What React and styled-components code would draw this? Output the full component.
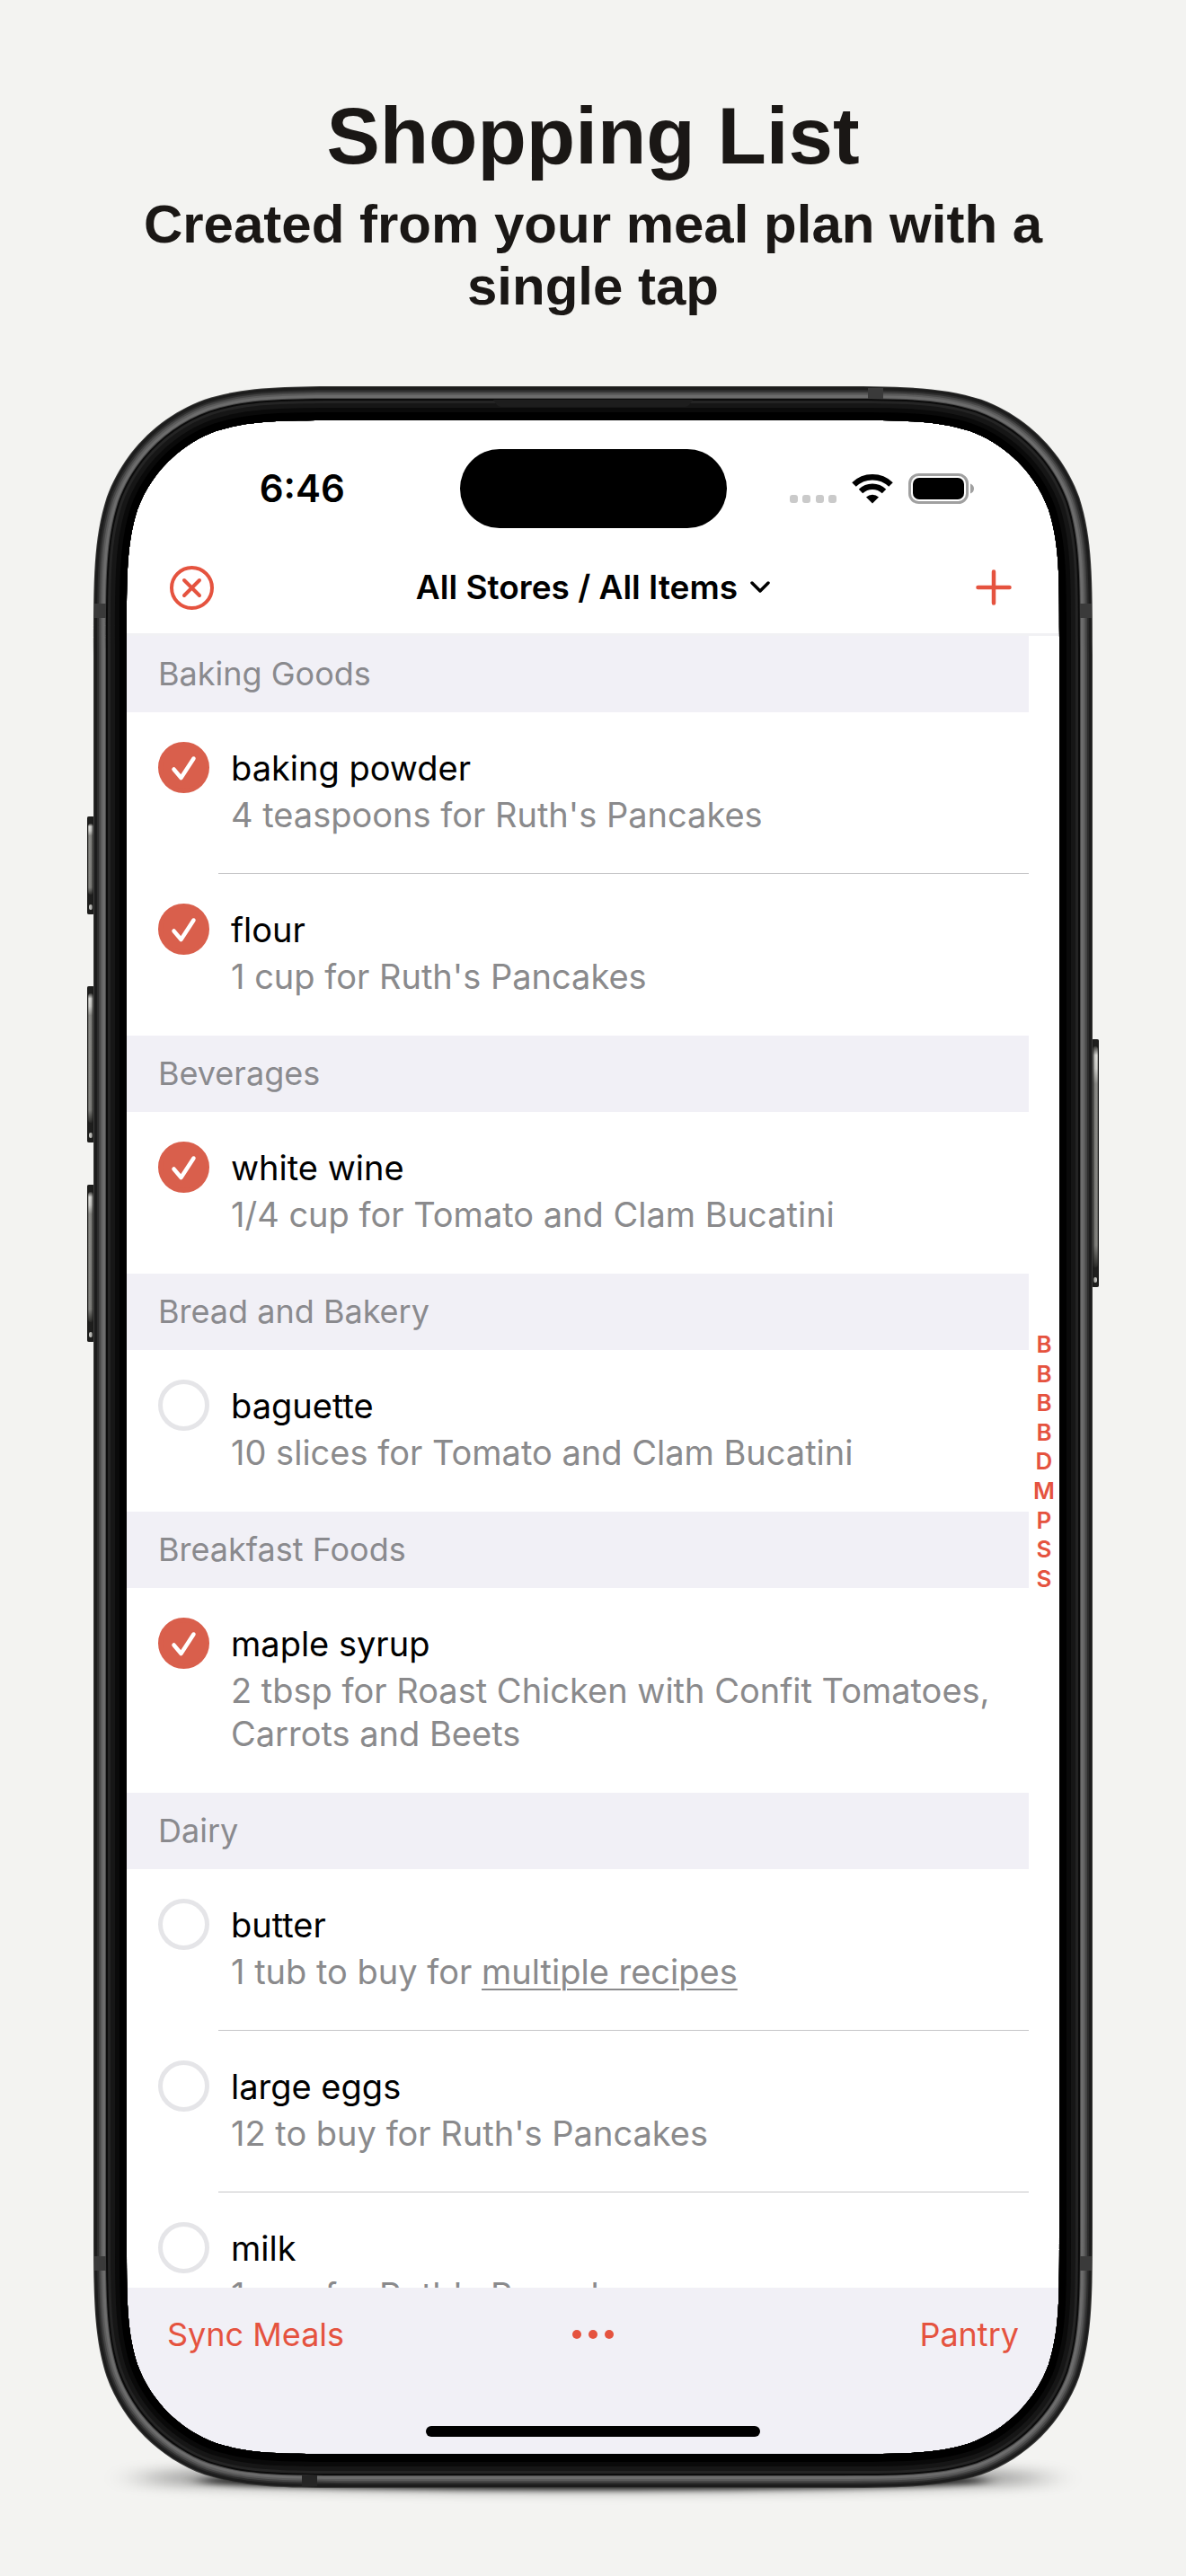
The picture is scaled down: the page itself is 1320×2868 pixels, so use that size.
import React, { useState } from "react";
import styled, { createGlobalStyle } from "styled-components";

const ink = "#1a1715";
const accent = "#e5533f";
const sans = `Inter, "Noto Sans", sans-serif`;

const GlobalStyle = createGlobalStyle`
  *, *::before, *::after { box-sizing: border-box; }
  body { margin: 0; background: #f3f3f1; font-family: ${sans}; }
  button { border: 0; padding: 0; background: none; font: inherit; color: inherit; cursor: pointer; }
  h1, h2, h3, p, ul { margin: 0; padding: 0; font-weight: inherit; }
  svg { display: block; }
`;

const Page = styled.main`
  display: flex;
  flex-direction: column;
  align-items: center;
  min-height: 100vh;
  padding: 101px 98px 98px;
`;

const Intro = styled.header`
  display: flex;
  flex-direction: column;
  gap: 13px;
  max-width: 1060px;
  margin-bottom: 77px;
  color: ${ink};
  font-family: "Liberation Sans", Arial, sans-serif;
  font-weight: 700;
  text-align: center;
`;

const Headline = styled.h1`
  font-size: 89px;
  line-height: 101px;
  font-weight: 700;
`;

const Tagline = styled.p`
  font-size: 60px;
  line-height: 69px;
`;

const Phone = styled.div`
  position: relative;
  width: 100%;
  max-width: 1112px;
  padding: 38px 37px;
`;

const FrameArt = styled.svg`
  position: absolute;
  inset: 0;
  z-index: 2;
  width: 100%;
  height: 100%;
  overflow: visible;
  pointer-events: none;
`;

const Screen = styled.div`
  position: relative;
  display: flex;
  flex-direction: column;
  overflow: hidden;
  border-radius: 140px;
  background: #fff;
`;

const StatusBar = styled.div`
  display: grid;
  grid-template-columns: 1fr 297px 1fr;
  align-items: center;
  height: 152px;
`;

const Clock = styled.time`
  justify-self: center;
  padding-left: 20px;
  font-size: 42px;
  line-height: 48px;
  font-weight: 600;
`;

const Island = styled.div`
  height: 88px;
  border-radius: 44px;
  background: #000;
`;

const StatusIcons = styled.div`
  display: flex;
  align-items: center;
  gap: 17px;
  padding-left: 70px;
`;

const NavBar = styled.nav`
  display: flex;
  align-items: center;
  justify-content: space-between;
  height: 85px;
  padding: 0 48px 17px;
`;

const IconButton = styled.button`
  display: flex;
  align-items: center;
  justify-content: center;
  width: 49px;
  height: 49px;
  color: ${accent};
`;

const StorePicker = styled.button`
  display: flex;
  align-items: center;
  gap: 14px;
  color: #000;
  font-size: 37px;
  line-height: 48px;
  font-weight: 600;
`;

const ListArea = styled.div`
  display: flex;
  height: 1842px;
  border-top: 3px solid #f1f1f4;
  overflow: hidden;
`;

const Sections = styled.div`
  flex: 1;
  min-width: 0;
`;

const SectionTitle = styled.h2`
  padding: 0 35px;
  background: #f1f0f6;
  color: #8a8a8e;
  font-size: 36px;
  line-height: 85px;
`;

const Item = styled.li`
  display: flex;
  gap: 10px;
  padding-left: 35px;
  list-style: none;
`;

const Tick = styled.label`
  flex: none;
  width: 57px;
  height: 57px;
  margin-top: 33px;
  border-radius: 50%;
  cursor: pointer;
`;

const TickInput = styled.input`
  appearance: none;
  display: block;
  width: 57px;
  height: 57px;
  margin: 0;
  border: 5px solid #e5e5e8;
  border-radius: 50%;
  cursor: inherit;
  &:checked {
    border-color: #d95f4c;
    background: #d95f4c;
  }
`;

const TickMark = styled.svg`
  width: 57px;
  height: 57px;
  margin-top: -57px;
  pointer-events: none;
`;

const ItemBody = styled.div`
  flex: 1;
  padding: 38px 14px 41px;
  border-bottom: 1px solid ${(p) => (p.$divided ? "#c6c6c8" : "transparent")};
  font-size: 38px;
  line-height: 48px;
`;

const ItemName = styled.h3`
  margin-bottom: 4px;
  color: #000;
  font-size: 38px;
`;

const ItemNote = styled.p`
  color: #8a8a8c;
`;

const RecipeLink = styled.a`
  color: inherit;
  text-decoration: underline;
  text-decoration-thickness: 2px;
  text-underline-offset: 5px;
`;

const IndexRail = styled.nav`
  display: grid;
  align-self: center;
  grid-auto-rows: 1fr;
  align-items: center;
  justify-items: center;
  width: 34px;
  height: 293px;
`;

const IndexLetter = styled.a`
  color: ${accent};
  font-size: 26px;
  line-height: 32px;
  font-weight: 600;
  text-decoration: none;
`;

const ToolBar = styled.footer`
  display: flex;
  flex-direction: column;
  justify-content: space-between;
  align-items: center;
  height: 185px;
  padding: 28px 45px 19px;
  background: #f1f0f6;
`;

const Actions = styled.div`
  display: grid;
  grid-template-columns: 1fr auto 1fr;
  align-items: center;
  width: 100%;
`;

const Action = styled.button`
  justify-self: ${(p) => p.$side};
  color: ${accent};
  font-size: 36px;
  line-height: 48px;
`;

const HomeBar = styled.div`
  width: 372px;
  height: 12px;
  border-radius: 6px;
  background: #000;
`;

const SECTIONS = [
  { title: "Baking Goods", items: [
    { name: "baking powder", note: "4 teaspoons for Ruth's Pancakes", done: true },
    { name: "flour", note: "1 cup for Ruth's Pancakes", done: true },
  ] },
  { title: "Beverages", items: [
    { name: "white wine", note: "1/4 cup for Tomato and Clam Bucatini", done: true },
  ] },
  { title: "Bread and Bakery", items: [
    { name: "baguette", note: "10 slices for Tomato and Clam Bucatini", done: false },
  ] },
  { title: "Breakfast Foods", items: [
    { name: "maple syrup", note: "2 tbsp for Roast Chicken with Confit Tomatoes, Carrots and Beets", done: true },
  ] },
  { title: "Dairy", items: [
    { name: "butter", note: "1 tub to buy for ", link: "multiple recipes", done: false },
    { name: "large eggs", note: "12 to buy for Ruth's Pancakes", done: false },
    { name: "milk", note: "1 cup for Ruth's Pancakes", done: false },
  ] },
];

const INDEX = ["B", "B", "B", "B", "D", "M", "P", "S", "S"];

/* Rounded rectangle with continuous-curvature corners. */
function squircle(x, y, w, h, r) {
  const a = 1.52866 * r, b = 1.08849 * r, c = 0.86841 * r, d = 0.63149 * r;
  const e = 0.07491 * r, f = 0.37282 * r, g = 0.16906 * r;
  const R = x + w, B = y + h;
  return [
    `M${x + a} ${y}H${R - a}`,
    `C${R - b} ${y} ${R - c} ${y} ${R - d} ${y + e}`,
    `C${R - f} ${y + g} ${R - g} ${y + f} ${R - e} ${y + d}`,
    `C${R} ${y + c} ${R} ${y + b} ${R} ${y + a}`,
    `V${B - a}`,
    `C${R} ${B - b} ${R} ${B - c} ${R - e} ${B - d}`,
    `C${R - g} ${B - f} ${R - f} ${B - g} ${R - d} ${B - e}`,
    `C${R - c} ${B} ${R - b} ${B} ${R - a} ${B}`,
    `H${x + a}`,
    `C${x + b} ${B} ${x + c} ${B} ${x + d} ${B - e}`,
    `C${x + f} ${B - g} ${x + g} ${B - f} ${x + e} ${B - d}`,
    `C${x} ${B - c} ${x} ${B - b} ${x} ${B - a}`,
    `V${y + a}`,
    `C${x} ${y + b} ${x} ${y + c} ${x + e} ${y + d}`,
    `C${x + g} ${y + f} ${x + f} ${y + g} ${x + d} ${y + e}`,
    `C${x + c} ${y} ${x + b} ${y} ${x + a} ${y}Z`,
  ].join("");
}

const W = 1112, H = 2340;
const hole = squircle(37, 38, 1038, 2264, 158);
const inset = (n) => squircle(n, n, W - 2 * n, H - 2 * n, 196 - n) + hole;
const METAL = [
  [0, "#3c3c3b"], [1, "#1c1c1c"], [4, "#2c2c2c"], [6, "#454545"], [8, "#5c5c5c"],
  [10, "#6c6c6c"], [13, "#4a4a4a"], [14, "#0b0b0b"], [16, "#242424"], [19, "#161616"], [24, "#0a0a0a"], [29, "#000"],
];

function SideButton({ x, y, h, side }) {
  return (
    <g>
      <rect x={x} y={y} width="8" height={h} rx="2" fill="#1f1f1e" />
      <rect x={x + 1} y={y + 8} width="6" height={h - 30} rx="3" fill="url(#buttonSheen)" />
      <rect x={x + 2} y={y + h - 11} width="4" height="6" rx="2" fill="#c4c4c0" />
      <rect x={x} y={y} width="8" height={h} rx="2" fill={`url(#shade-${side})`} />
    </g>
  );
}

function PhoneFrame() {
  return (
    <FrameArt viewBox={`0 0 ${W} ${H}`} preserveAspectRatio="none" aria-hidden="true">
      <defs>
        <filter id="soft" x="-20%" y="-300%" width="140%" height="700%">
          <feGaussianBlur stdDeviation="20 8" />
        </filter>
        <filter id="contact" x="-20%" y="-200%" width="140%" height="500%">
          <feGaussianBlur stdDeviation="10 3" />
        </filter>
        <linearGradient id="buttonSheen" x2="0" y2="1">
          <stop offset="0" stopColor="#3a3a38" />
          <stop offset="0.04" stopColor="#dededa" />
          <stop offset="0.1" stopColor="#d0d0cc" />
          <stop offset="0.17" stopColor="#8b8b87" />
          <stop offset="0.9" stopColor="#82827e" />
          <stop offset="1" stopColor="#2a2a28" />
        </linearGradient>
        <linearGradient id="shade-left">
          <stop offset="0" stopColor="#1a1a19" stopOpacity="0.7" />
          <stop offset="0.3" stopColor="#1a1a19" stopOpacity="0" />
          <stop offset="0.55" stopColor="#1a1a19" stopOpacity="0.1" />
          <stop offset="0.9" stopColor="#1a1a19" stopOpacity="0.9" />
        </linearGradient>
        <linearGradient id="shade-right" x1="1" x2="0">
          <stop offset="0" stopColor="#1a1a19" stopOpacity="0.7" />
          <stop offset="0.3" stopColor="#1a1a19" stopOpacity="0" />
          <stop offset="0.55" stopColor="#1a1a19" stopOpacity="0.1" />
          <stop offset="0.9" stopColor="#1a1a19" stopOpacity="0.9" />
        </linearGradient>
        <clipPath id="below">
          <path clipRule="evenodd" d={`M-100 2200H1212V2460H-100Z${hole}`} />
        </clipPath>
      </defs>
      <g clipPath="url(#below)">
        <ellipse cx="556" cy="2329" rx="510" ry="12" fill="#000" opacity="0.5" filter="url(#soft)" />
        <ellipse cx="556" cy="2332" rx="440" ry="10" fill="#000" opacity="0.8" filter="url(#contact)" />
      </g>
      <SideButton x={-7} y={479} h={109} side="left" />
      <SideButton x={-7} y={668} h={174} side="left" />
      <SideButton x={-7} y={889} h={175} side="left" />
      <SideButton x={1111} y={727} h={276} side="right" />
      {METAL.map(([n, color]) => (
        <path key={n} d={inset(n)} fill={color} fillRule="evenodd" />
      ))}
      <g fill="#3a3a3a">
        <rect x="862" y="2" width="17" height="12" />
        <rect x="1" y="242" width="13" height="16" />
        <rect x="1098" y="242" width="13" height="16" />
        <rect x="1" y="2082" width="13" height="16" />
        <rect x="1098" y="2082" width="13" height="16" />
      </g>
      <rect x="232" y="2326" width="17" height="12" fill="#252525" />
      <path d="M445 15h222l-4 6q-2 2-5 2H454q-3 0-5-2z" fill="#1d1d1d" />
    </FrameArt>
  );
}

function ListItem({ item, divided, id }) {
  const [done, setDone] = useState(item.done);
  return (
    <Item>
      <Tick htmlFor={id}>
        <TickInput id={id} type="checkbox" aria-label={item.name} checked={done} onChange={() => setDone(!done)} />
        {done && (
          <TickMark viewBox="0 0 57 57" fill="none" stroke="#fff" strokeWidth="4.500" strokeLinecap="round" strokeLinejoin="round">
            <path d="M17.500 30.500l8 9.500L39.500 18.500" />
          </TickMark>
        )}
      </Tick>
      <ItemBody $divided={divided}>
        <ItemName>{item.name}</ItemName>
        <ItemNote>
          {item.note}
          {item.link && <RecipeLink href="#recipes">{item.link}</RecipeLink>}
        </ItemNote>
      </ItemBody>
    </Item>
  );
}

export default function App() {
  return (
    <>
      <GlobalStyle />
      <Page>
        <Intro>
          <Headline>Shopping List</Headline>
          <Tagline>Created from your meal plan with a single tap</Tagline>
        </Intro>
        <Phone>
          <PhoneFrame />
          <Screen>
            <StatusBar>
              <Clock>6:46</Clock>
              <Island />
              <StatusIcons>
                <svg width="52" height="34" viewBox="0 0 52 34" fill="#cacaca" aria-hidden="true">
                  <rect x="0" y="24" width="9" height="9" rx="3" />
                  <rect x="14" y="24" width="9" height="9" rx="3" />
                  <rect x="29" y="24" width="9" height="9" rx="3" />
                  <rect x="43" y="24" width="9" height="9" rx="3" />
                </svg>
                <svg width="46" height="34" viewBox="0 0 46 34" fill="none" stroke="#000" aria-hidden="true">
                  <path d="M2.500 12.500a29.500 29.500 0 0 1 41 0" strokeWidth="6.500" />
                  <path d="M10 20a19 19 0 0 1 26 0" strokeWidth="6.500" />
                  <path d="M23 33.500l-7-7a10.500 10.500 0 0 1 14 0z" fill="#000" stroke="none" />
                </svg>
                <svg width="74" height="34" viewBox="0 0 74 34" aria-hidden="true">
                  <rect x="1.500" y="1.500" width="64" height="31" rx="10" fill="none" stroke="#a0a0a0" strokeWidth="3" />
                  <rect x="5" y="5" width="57" height="24" rx="7" fill="#000" />
                  <path d="M69 11.500q4 1.500 4 5.500t-4 5.500z" fill="#a0a0a0" />
                </svg>
              </StatusIcons>
            </StatusBar>
            <NavBar>
              <IconButton aria-label="Close">
                <svg width="49" height="49" viewBox="0 0 49 49" fill="none" stroke="currentColor" strokeWidth="4" strokeLinecap="round">
                  <circle cx="24.500" cy="24.500" r="22.500" />
                  <path d="M16 16l17 17M33 16l-17 17" />
                </svg>
              </IconButton>
              <StorePicker>
                All Stores / All Items
                <svg width="22" height="14" viewBox="0 0 22 14" fill="none" stroke="#000" strokeWidth="3.500" strokeLinecap="round" strokeLinejoin="round" aria-hidden="true">
                  <path d="M2 2l9 9 9-9" />
                </svg>
              </StorePicker>
              <IconButton aria-label="Add item">
                <svg width="40" height="40" viewBox="0 0 40 40" fill="none" stroke="currentColor" strokeWidth="4.500" strokeLinecap="round">
                  <path d="M20 2.500v35M2.500 20h35" />
                </svg>
              </IconButton>
            </NavBar>
            <ListArea>
              <Sections>
                {SECTIONS.map((section) => (
                  <section key={section.title}>
                    <SectionTitle>{section.title}</SectionTitle>
                    <ul>
                      {section.items.map((item, i) => (
                        <ListItem
                          key={item.name}
                          id={item.name.replace(" ", "-")}
                          item={item}
                          divided={i < section.items.length - 1}
                        />
                      ))}
                    </ul>
                  </section>
                ))}
              </Sections>
              <IndexRail aria-label="Section index">
                {INDEX.map((letter, i) => (
                  <IndexLetter key={i} href="#list">{letter}</IndexLetter>
                ))}
              </IndexRail>
            </ListArea>
            <ToolBar>
              <Actions>
                <Action $side="start">Sync Meals</Action>
                <Action $side="center" aria-label="More">
                  <svg width="46" height="10" viewBox="0 0 46 10" fill="currentColor">
                    <circle cx="5" cy="5" r="5" />
                    <circle cx="23" cy="5" r="5" />
                    <circle cx="41" cy="5" r="5" />
                  </svg>
                </Action>
                <Action $side="end">Pantry</Action>
              </Actions>
              <HomeBar />
            </ToolBar>
          </Screen>
        </Phone>
      </Page>
    </>
  );
}
